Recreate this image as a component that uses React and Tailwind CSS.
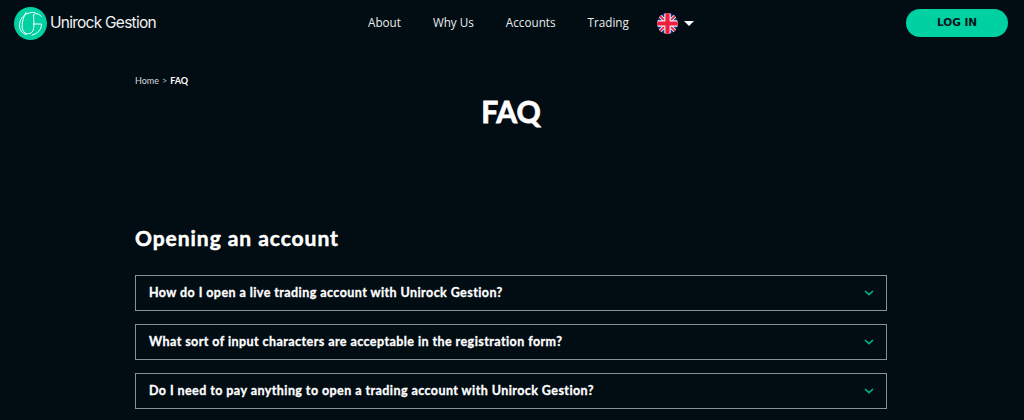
const ui = { fontFamily: '"Open Sans", sans-serif' };
const geo = { fontFamily: 'Lato, sans-serif' };

function Logo() {
  return (
    <svg width="33" height="33" viewBox="0 0 33 33" fill="none">
      <circle cx="16.5" cy="16.5" r="16.5" fill="#00d1a3" />
      <g stroke="#ffffff" strokeWidth="1" fill="none" strokeLinecap="round">
        <path d="M21 5.5C13.5 4.5 6 9.5 5.5 17.5C5.2 22.5 8 26.5 12 27.5" />
        <path d="M12 5.5C8.5 12 7 19 9 23.5C11 27.5 16 27.8 18.5 24.5C20.5 21.5 20 14 19.5 8" />
        <path d="M19.5 8C21 5.8 24.5 6 27.5 9.5M19.5 17H27.5C27.5 22 24 27 18 28" />
      </g>
    </svg>
  );
}

function Flag() {
  return (
    <svg width="21" height="21" viewBox="0 0 21 21">
      <defs>
        <clipPath id="flag-clip"><circle cx="10.5" cy="10.5" r="10.5" /></clipPath>
      </defs>
      <g clipPath="url(#flag-clip)">
        <rect width="21" height="21" fill="#1f2f8f" />
        <path d="M0 0L21 21M21 0L0 21" stroke="#f2e6ea" strokeWidth="3.6" />
        <path d="M0 0L21 21M21 0L0 21" stroke="#e0203f" strokeWidth="1.6" />
        <path d="M10.5 0V21M0 10.5H21" stroke="#f5f0f2" strokeWidth="6.4" />
        <path d="M10.5 0V21M0 10.5H21" stroke="#ee1f3c" strokeWidth="4.2" />
      </g>
    </svg>
  );
}

function Question({ text }) {
  return (
    <div className="flex h-[36px] w-[752px] items-center justify-between border border-[#8b9092] pl-[13px] pr-[12px]">
      <span className="text-[12.5px] font-bold tracking-[0.43px] text-white [-webkit-text-stroke:0.3px_white]" style={geo}>{text}</span>
      <svg width="10" height="6" viewBox="0 0 10 6" fill="none">
        <path d="M1 1l4 3.6L9 1" stroke="#00b48c" strokeWidth="1.6" />
      </svg>
    </div>
  );
}

export default function App() {
  return (
    <div className="h-[420px] w-[1024px] overflow-hidden bg-[#020c13] text-white" style={ui}>
      <header className="flex h-[46px] items-center pl-[14px] pr-[16px]">
        <div className="flex w-[354px] items-center gap-[3px]">
          <Logo />
          <span className="text-[15.5px] tracking-[-0.75px] text-[#f1f3f3]" style={{ fontFamily: 'Inter, sans-serif' }}>Unirock Gestion</span>
        </div>
        <nav className="flex items-center gap-[32px] text-[11.7px] text-[#e8ecee]">
          <span>About</span>
          <span>Why Us</span>
          <span>Accounts</span>
          <span>Trading</span>
        </nav>
        <div className="ml-[28px] flex items-center gap-[6px]">
          <Flag />
          <span className="h-0 w-0 border-x-[5px] border-t-[5px] border-x-transparent border-t-white" />
        </div>
        <button className="ml-auto h-[28px] w-[102px] rounded-full bg-[#00d1a3] text-[10.5px] font-bold text-[#02141a]" style={{ fontFamily: '"DejaVu Sans", sans-serif' }}>
          LOG IN
        </button>
      </header>

      <main className="ml-[135px] w-[752px]">
        <div className="mt-[29px] flex h-[12px] items-center gap-[3px] text-[9px]" style={geo}>
          <span className="text-[#d6dbdd]">Home</span>
          <span className="text-[#b4babc]">&gt;</span>
          <span className="font-bold">FAQ</span>
        </div>
        <h1 className="mt-[4px] text-center text-[30px] font-bold leading-[40px] [-webkit-text-stroke:0.8px_white]" style={geo}>FAQ</h1>
        <h2 className="mt-[94px] text-[21px] font-bold leading-[26px] tracking-[0.95px] [-webkit-text-stroke:0.5px_white]" style={geo}>Opening an account</h2>
        <div className="mt-[24px] flex flex-col gap-[13px]">
          <Question text="How do I open a live trading account with Unirock Gestion?" />
          <Question text="What sort of input characters are acceptable in the registration form?" />
          <Question text="Do I need to pay anything to open a trading account with Unirock Gestion?" />
        </div>
      </main>
    </div>
  );
}
